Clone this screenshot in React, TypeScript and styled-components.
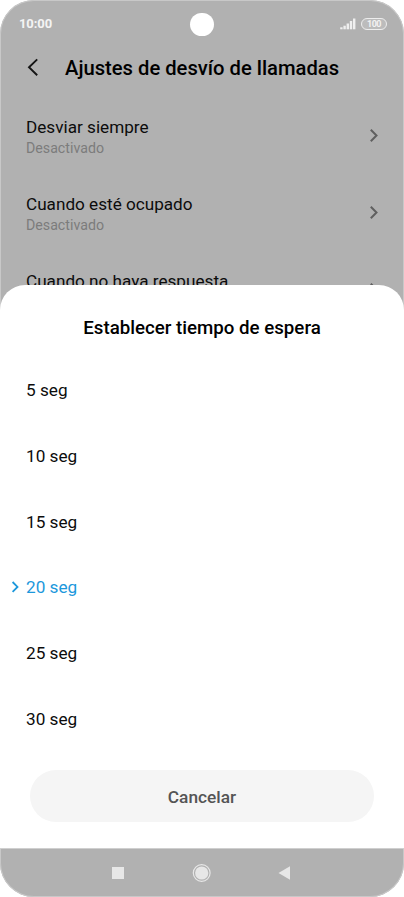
import React from 'react';
import styled, { createGlobalStyle } from 'styled-components';

const GlobalStyle = createGlobalStyle`
  * { box-sizing: border-box; }
  body { margin: 0; background: #fff; }
`;

const Phone = styled.main`
  width: 404px;
  height: 897px;
  display: flex;
  flex-direction: column;
  overflow: hidden;
  border-radius: 34px;
  background: #b1b1b1;
  box-shadow: inset 0 0 0 1px #c8c8c8;
  font-family: Roboto, sans-serif;
  color: #000;
`;

const Backdrop = styled.section`
  height: 284.6px;
  flex: none;
  overflow: hidden;
`;

const StatusBar = styled.header`
  height: 48px;
  padding: 0 17px 0 19px;
  display: grid;
  grid-template-columns: 1fr 24px 1fr;
  align-items: center;
`;

const Clock = styled.span`
  font-size: 13px;
  font-weight: 700;
  line-height: 16px;
  letter-spacing: -0.1px;
  color: #f4f4f4;
`;

const Camera = styled.span`
  width: 23.6px;
  height: 23.6px;
  margin-left: -0.8px;
  margin-top: 0.8px;
  border-radius: 50%;
  background: #fff;
`;

const Indicators = styled.div`
  display: flex;
  justify-content: flex-end;
  align-items: center;
  gap: 5px;
`;

const Battery = styled.span`
  width: 26px;
  height: 12px;
  border: 1px solid #ededed;
  border-radius: 6px;
  display: flex;
  align-items: center;
  justify-content: center;
  font-size: 9px;
  font-weight: 700;
  line-height: 10px;
  letter-spacing: -0.5px;
  color: #f2f2f2;
  background: #bcbcbc;
`;

const TitleBar = styled.div`
  height: 40px;
  padding-left: 27px;
  display: flex;
  align-items: center;
  gap: 26px;
`;

const Title = styled.h1`
  margin: 0;
  font-size: 20.2px;
  font-weight: 500;
  line-height: 24px;
  white-space: nowrap;
`;

const SettingsList = styled.div`
  padding: 28px 26px 0;
`;

const Setting = styled.div`
  height: 77px;
  display: flex;
  justify-content: space-between;
`;

const SettingName = styled.div`
  font-size: 17.15px;
  line-height: 22px;
  white-space: nowrap;
  color: #0c0c0c;
`;

const SettingState = styled.div`
  font-size: 14.2px;
  line-height: 20px;
  color: #7c7c7c;
`;

const SettingArrow = styled.svg`
  margin-top: 12px;
`;

const Sheet = styled.section`
  height: 563.4px;
  flex: none;
  display: flex;
  flex-direction: column;
  border-radius: 25px 25px 0 0;
  background: #fff;
`;

const SheetTitle = styled.h2`
  margin: 31.4px 0 17.1px;
  text-align: center;
  font-size: 18.7px;
  font-weight: 500;
  line-height: 24px;
`;

const Option = styled.div<{ $selected: boolean }>`
  height: 65.8px;
  padding-left: 11px;
  display: flex;
  align-items: center;
  font-size: 17.2px;
  line-height: 22px;
  color: ${(p) => (p.$selected ? '#1c98dc' : '#0c0c0c')};
`;

const Marker = styled.span`
  width: 15px;
  height: 13px;
  display: flex;
`;

const CancelButton = styled.button`
  width: 344px;
  height: 52px;
  margin: 18.2px 0 0 30px;
  padding: 2px 0 0;
  border: 0;
  border-radius: 26px;
  background: #f5f5f5;
  color: #545454;
  font: 500 17.3px/22px Roboto, sans-serif;
`;

const NavBar = styled.nav`
  height: 49px;
  flex: none;
  padding: 0 112px 0 111px;
  display: flex;
  align-items: center;
  justify-content: space-between;
  border-top: 1px solid #cfcfcf;
`;

const settings = [
  { name: 'Desviar siempre', state: 'Desactivado' },
  { name: 'Cuando esté ocupado', state: 'Desactivado' },
  { name: 'Cuando no haya respuesta' },
];

const times = [5, 10, 15, 20, 25, 30];
const selectedTime = 20;

export default function App() {
  return (
    <>
      <GlobalStyle />
      <Phone>
        <Backdrop>
          <StatusBar>
            <Clock>10:00</Clock>
            <Camera />
            <Indicators>
              <svg width="16" height="12" viewBox="0 0 16 12" fill="#efefef">
                <rect x="0.2" y="9.3" width="2.4" height="2" />
                <rect x="3.4" y="7.7" width="2.4" height="3.6" />
                <rect x="6.6" y="5.5" width="2.4" height="5.8" />
                <rect x="9.8" y="3" width="2.4" height="8.3" />
                <rect x="13" y="0.5" width="2.4" height="10.8" />
              </svg>
              <Battery>100</Battery>
            </Indicators>
          </StatusBar>
          <TitleBar>
            <svg width="12" height="20" viewBox="0 0 12 20" fill="none" stroke="#151515" strokeWidth="1.9">
              <path d="M10.2 1.4 2 9.3l8.2 8" />
            </svg>
            <Title>Ajustes de desvío de llamadas</Title>
          </TitleBar>
          <SettingsList>
            {settings.map((s) => (
              <Setting key={s.name}>
                <div>
                  <SettingName>{s.name}</SettingName>
                  {s.state && <SettingState>{s.state}</SettingState>}
                </div>
                <SettingArrow width="10" height="16" viewBox="0 0 10 16" fill="none" stroke="#5f5f5f" strokeWidth="2">
                  <path d="m2.8 1.8 5.7 5.7-5.7 5.7" />
                </SettingArrow>
              </Setting>
            ))}
          </SettingsList>
        </Backdrop>
        <Sheet>
          <SheetTitle>Establecer tiempo de espera</SheetTitle>
          {times.map((t) => (
            <Option key={t} $selected={t === selectedTime}>
              <Marker>
                {t === selectedTime && (
                  <svg width="9" height="12" viewBox="0 0 9 12" fill="none" stroke="currentColor" strokeWidth="1.8">
                    <path d="m1.6 1 4.9 4.9-4.9 4.9" />
                  </svg>
                )}
              </Marker>
              {t} seg
            </Option>
          ))}
          <CancelButton>Cancelar</CancelButton>
        </Sheet>
        <NavBar>
          <svg width="14" height="14" viewBox="0 0 14 14"><rect x="1" y="1" width="12" height="12" fill="#e7e7e7" /></svg>
          <svg width="20" height="20" viewBox="0 0 20 20">
            <circle cx="9.7" cy="10" r="8.4" fill="none" stroke="#e7e7e7" strokeWidth="1.2" />
            <circle cx="9.7" cy="10" r="6.6" fill="#e7e7e7" />
          </svg>
          <svg width="14" height="14" viewBox="0 0 14 14"><path d="M.5 7 12 .2v13.6z" fill="#e7e7e7" /></svg>
        </NavBar>
      </Phone>
    </>
  );
}
